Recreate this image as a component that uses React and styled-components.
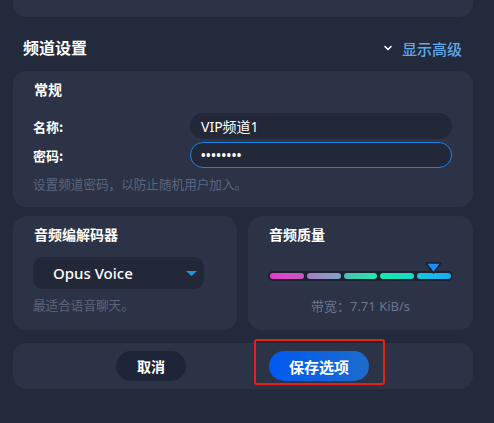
import styled, { createGlobalStyle } from "styled-components"

const GlobalStyle = createGlobalStyle`
    html, body {
        margin: 0;
        padding: 0;
        background: #232a3b;
        overflow: hidden;
    }
    body {
        font-family: "Noto Sans", "Noto Sans CJK SC", sans-serif;
        color: #ffffff;
    }
`

const segments = [
    ['#ea3bc9', '#c25cbf'],
    ['#a77bc1', '#7ea7c7'],
    ['#4fbfb1', '#25e4b1'],
    ['#16e8b2', '#18d8c4'],
    ['#17c6de', '#18acf2'],
]

export default function App() {
    return (
        <>
            <GlobalStyle />
            <Page>
                <TopCard>
                    <Faded>无描述</Faded>
                    <TopIcon />
                </TopCard>

                <HeadingRow>
                    <H2>频道设置</H2>
                    <Advanced>
                        <svg width="10" height="10" viewBox="0 0 10 10">
                            <path d="M2 3.5 L5 6.5 L8 3.5" fill="none" stroke="#ffffff" strokeWidth="1.6" strokeLinecap="round" strokeLinejoin="round" />
                        </svg>
                        <span>显示高级</span>
                    </Advanced>
                </HeadingRow>

                <Card>
                    <CardTitle>常规</CardTitle>
                    <FormGrid>
                        <Label>名称:</Label>
                        <Input>VIP频道1</Input>
                        <Label>密码:</Label>
                        <Input focused>••••••••</Input>
                    </FormGrid>
                    <Hint>设置频道密码，以防止随机用户加入。</Hint>
                </Card>

                <Columns>
                    <SmallCard>
                        <CardTitle>音频编解码器</CardTitle>
                        <Select>
                            <span>Opus Voice</span>
                            <svg width="11" height="7" viewBox="0 0 11 7">
                                <path d="M0 0 H11 L5.5 5 Z" fill="#2f8fdc" />
                            </svg>
                        </Select>
                        <Hint>最适合语音聊天。</Hint>
                    </SmallCard>

                    <SmallCard>
                        <CardTitle>音频质量</CardTitle>
                        <SliderWrap>
                            <Marker>
                                <svg width="17" height="12" viewBox="0 0 17 12">
                                    <path d="M1 1 H16 L8.5 11 Z" fill="#1b8cf2" stroke="#1a2030" strokeWidth="1.5" strokeLinejoin="round" />
                                </svg>
                            </Marker>
                            <Track>
                                {segments.map(([a, b], i) => (
                                    <Segment key={i} from={a} to={b} />
                                ))}
                            </Track>
                        </SliderWrap>
                        <Bandwidth>带宽：7.71 KiB/s</Bandwidth>
                    </SmallCard>
                </Columns>

                <ActionCard>
                    <Button>取消</Button>
                    <Highlight>
                        <Button primary>保存选项</Button>
                    </Highlight>
                </ActionCard>
            </Page>
        </>
    )
}

const Page = styled.div`
    padding: 0 21px 0 13px;
    display: flex;
    flex-direction: column;
`

const TopCard = styled.div`
    margin-top: -30px;
    height: 47px;
    background: #2c3346;
    border-radius: 0 0 14px 14px;
    padding: 0 30px;
    display: flex;
    align-items: flex-start;
    justify-content: space-between;
`

const Faded = styled.div`
    font-family: "Noto Sans CJK SC", sans-serif;
    font-size: 13px;
    color: #5d6781;
    line-height: 30px;
    margin-top: -5px;
`

const TopIcon = styled.div`
    width: 12px;
    height: 12px;
    margin-top: 20px;
    margin-right: 5px;
    border: 2px solid #ffffff;
    border-radius: 3px;
    box-sizing: border-box;
    transform: translateY(-22px);
`

const HeadingRow = styled.div`
    display: flex;
    align-items: center;
    justify-content: space-between;
    padding: 24px 11px 0 10px;
    height: 36px;
    box-sizing: border-box;
    margin-bottom: 18px;
`

const H2 = styled.h2`
    margin: 0;
    font-family: "Noto Sans CJK SC", sans-serif;
    font-size: 16px;
    font-weight: 700;
    color: #ffffff;
`

const Advanced = styled.div`
    display: flex;
    align-items: center;
    gap: 9px;
    font-family: "Noto Sans CJK SC", sans-serif;
    font-size: 15px;
    font-weight: 500;
    color: #5fa8ea;
    margin-top: 2px;
`

const Card = styled.section`
    background: #2c3346;
    border-radius: 14px;
    padding: 8px 21px 14px 20px;
`

const CardTitle = styled.div`
    font-family: "Noto Sans CJK SC", sans-serif;
    font-size: 14px;
    font-weight: 700;
    color: #ffffff;
    line-height: 20px;
    padding-left: 1px;
`

const FormGrid = styled.div`
    display: grid;
    grid-template-columns: 157px 1fr;
    row-gap: 3px;
    align-items: center;
    margin-top: 14px;
`

const Label = styled.div`
    font-family: "Noto Sans CJK SC", sans-serif;
    font-size: 13px;
    font-weight: 700;
    color: #ffffff;
`

const Input = styled.div`
    height: 26px;
    box-sizing: border-box;
    border-radius: 13px;
    background: #222838;
    border: 1px solid ${({ focused }) => focused ? '#1c80e4' : 'transparent'};
    padding: 0 10px;
    display: flex;
    align-items: center;
    font-family: "Noto Sans", "Noto Sans CJK SC", sans-serif;
    font-size: ${({ focused }) => focused ? '12px' : '14px'};
    font-weight: ${({ focused }) => focused ? 700 : 400};
    letter-spacing: ${({ focused }) => focused ? '0.6px' : '0'};
    color: #ffffff;
`

const Hint = styled.div`
    font-family: "Noto Sans CJK SC", sans-serif;
    font-size: 12.6px;
    color: #5b6580;
    margin-top: 6px;
`

const Columns = styled.div`
    display: grid;
    grid-template-columns: 224px 1fr;
    gap: 11px;
    margin-top: 9px;
`

const SmallCard = styled.section`
    background: #2c3346;
    border-radius: 14px;
    padding: 8px 20px 0 20px;
    height: 114px;
    box-sizing: border-box;
`

const Select = styled.div`
    margin-top: 13px;
    width: 171px;
    height: 32px;
    background: #222838;
    border-radius: 10px;
    display: flex;
    align-items: center;
    justify-content: space-between;
    padding: 0 7px 0 20px;
    box-sizing: border-box;
    font-family: "Noto Sans", sans-serif;
    font-size: 15px;
    font-weight: 500;
    color: #ffffff;

    svg {
        margin-top: 2px;
    }
`

const SliderWrap = styled.div`
    position: relative;
    margin-top: 15px;
    padding-top: 12px;
    width: 185px;
`

const Marker = styled.div`
    position: absolute;
    top: 3px;
    right: 11px;
    line-height: 0;
    z-index: 1;
`

const Track = styled.div`
    display: flex;
    gap: 3px;
    background: #1b2131;
    border-radius: 5px;
    padding: 2px;
    height: 10px;
    box-sizing: border-box;
`

const Segment = styled.div`
    flex: 1;
    border-radius: 3px;
    background: linear-gradient(90deg, ${({ from }) => from}, ${({ to }) => to});
`

const Bandwidth = styled.div`
    font-family: "Noto Sans", "Noto Sans CJK SC", sans-serif;
    font-size: 13px;
    color: #6b7592;
    text-align: center;
    margin-top: 15px;
`

const ActionCard = styled.section`
    margin-top: 13px;
    background: #2c3346;
    border-radius: 14px;
    height: 46px;
    display: flex;
    align-items: center;
    padding-left: 103px;
    gap: 68px;
`

const Highlight = styled.div`
    align-self: flex-start;
    margin-top: -4px;
    border: 2px solid #e62117;
    border-radius: 3px;
    padding: 10px 14px 2px 13px;
`

const Button = styled.button`
    height: 30px;
    border: none;
    border-radius: 15px;
    padding: 0;
    width: ${({ primary }) => primary ? '100px' : '70px'};
    background: ${({ primary }) => primary ? 'linear-gradient(90deg, #005af0, #1c6bcc)' : '#1f2538'};
    color: #ffffff;
    font-family: "Noto Sans CJK SC", sans-serif;
    font-size: ${({ primary }) => primary ? '15px' : '14px'};
    font-weight: 700;
    display: flex;
    align-items: center;
    justify-content: center;
`
